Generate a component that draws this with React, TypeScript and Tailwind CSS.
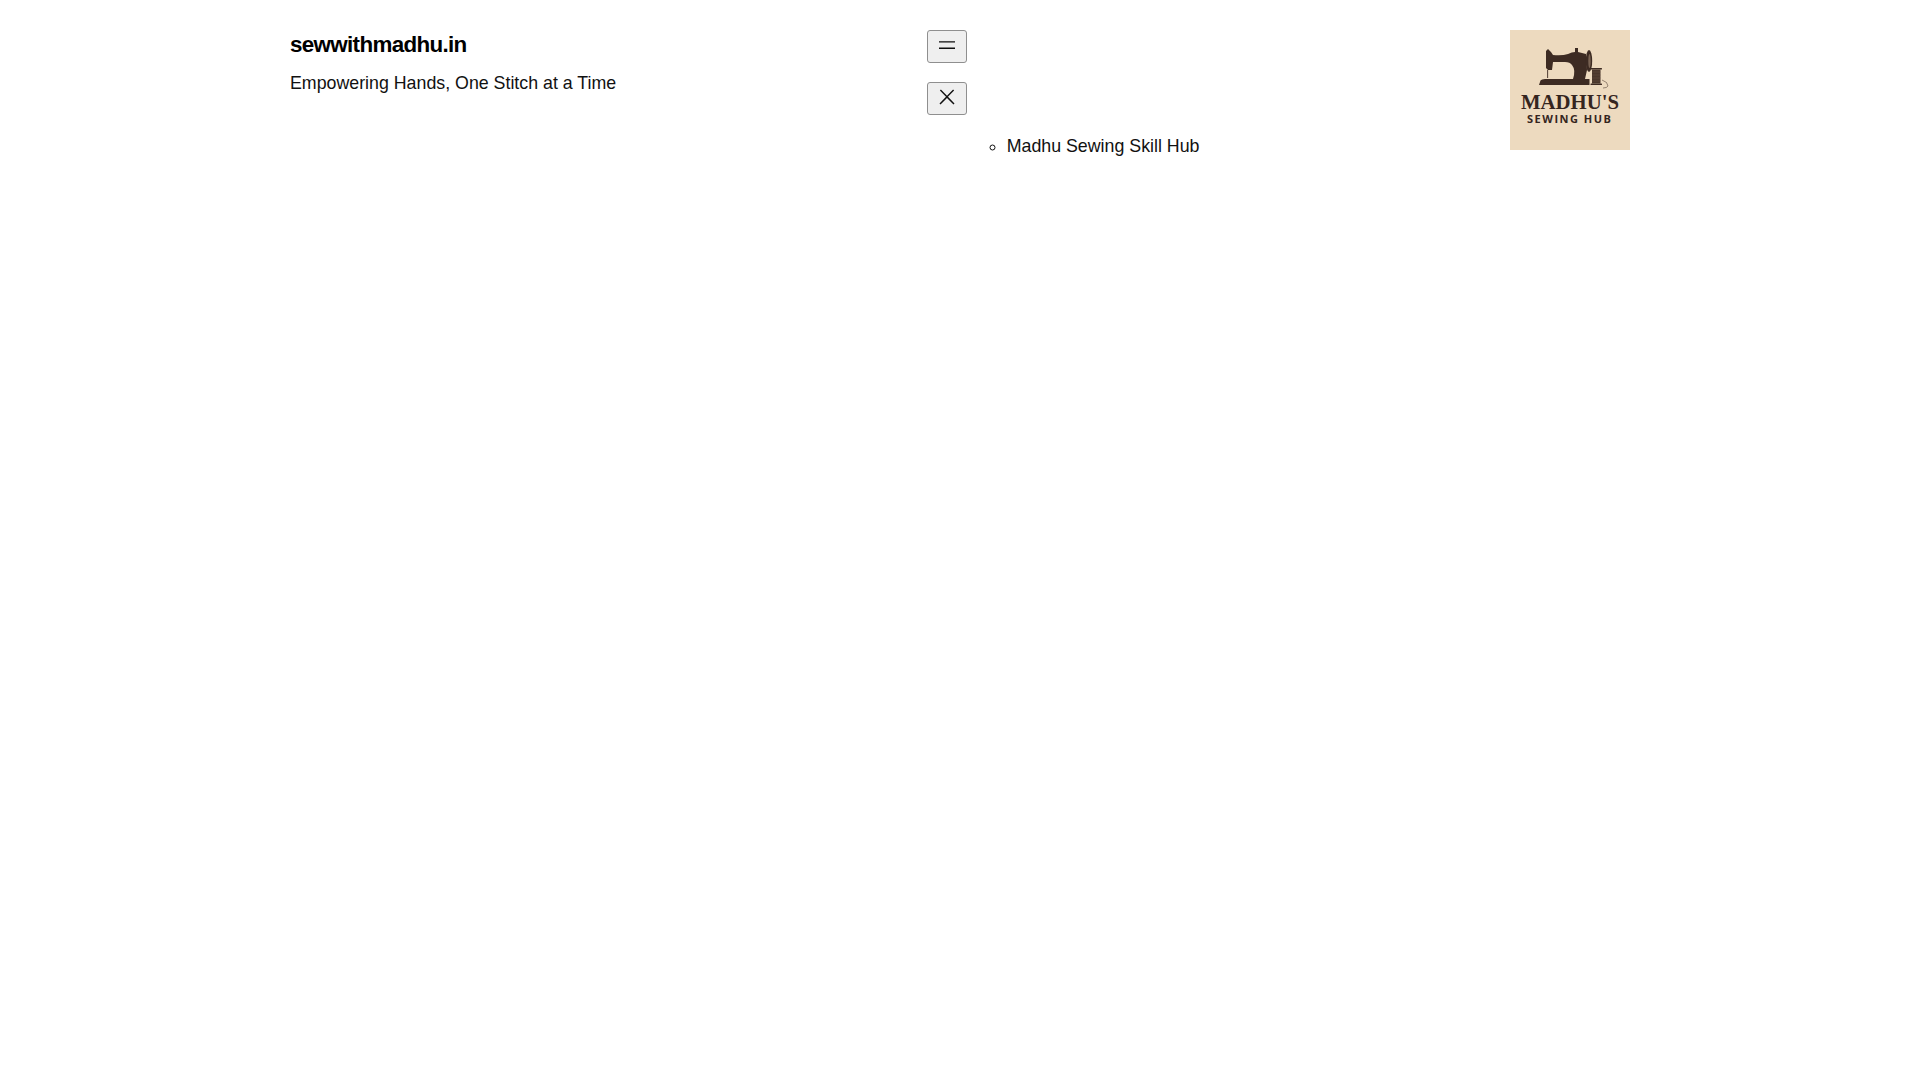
export default function App() {
  return (
    <div className="min-h-screen bg-white text-[#111111] font-['Liberation_Sans',Arial,sans-serif]">
      <header className="mx-auto flex w-[1340px] items-start justify-between pt-[30px]">
        <div>
          <p className="mt-[1px] text-[22.4px] leading-[28px] font-bold tracking-[-0.67px] text-black">sewwithmadhu.in</p>
          <p className="mt-[11px] text-[17.8px] leading-[27px]">Empowering Hands, One Stitch at a Time</p>
        </div>
        <nav className="flex flex-col items-start">
          <button className="flex h-[33px] w-10 items-center justify-center rounded-[3px] border border-[#8f8f8f] bg-[#efefef]">
            <svg width="24" height="24" viewBox="0 0 24 24" fill="#111111" className="-mt-[2px]">
              <path d="M4 7.2v1.4h16V7.2H4zm0 7.8h16v-1.4H4V15z" />
            </svg>
          </button>
          <button className="mt-[19px] flex h-[33px] w-10 items-center justify-center rounded-[3px] border border-[#8f8f8f] bg-[#efefef]">
            <svg width="24" height="24" viewBox="0 0 24 24" fill="#111111" className="-mt-[4px]">
              <path d="M13 11.8l6.1-6.3-1-1-6.1 6.2-6.1-6.2-1 1 6.1 6.3-6.5 6.7 1 1 6.5-6.6 6.5 6.6 1-1z" />
            </svg>
          </button>
          <ul className="pl-10 pt-[18px] text-[17.8px] leading-[27px]">
            <li>
              <ul className="list-[circle] pl-10">
                <li>Madhu Sewing Skill Hub</li>
              </ul>
            </li>
          </ul>
        </nav>
        <svg width="120" height="120" viewBox="0 0 120 120" className="block shrink-0">
          <rect width="120" height="120" fill="#eddabf" />
          <g fill="#3d2b23">
            <path d="M29 55 L30.500 50.500 Q31.500 49 35 49 L79.500 49 L79.500 55 Z" />
            <path d="M36 21 L38 19 L41 22 L43 25 Q52 26 58 24 Q62 22 65 22 L65 18 L68 18 L68 22 L76 24 L77 40 L75 49 L63 49 Q66 40 62 35 Q60 32 55 32 L43 32 L42 40 L38 40 L36 38 Z" />
            <ellipse cx="79" cy="31" rx="3.200" ry="11" />
            <rect x="37.200" y="40" width="0.900" height="8" />
            <rect x="80.500" y="38" width="11.500" height="1.500" rx="0.600" />
            <rect x="82" y="39.500" width="8.500" height="14" fill="#4a372c" />
            <rect x="80.500" y="53.500" width="11.500" height="1.500" rx="0.600" />
          </g>
          <ellipse cx="79.500" cy="31" rx="1.200" ry="7" fill="#7a6454" />
          <g stroke="#6f5949" strokeWidth="0.400">
            <path d="M82 42 H90.500 M82 45 H90.500 M82 48 H90.500 M82 51 H90.500" />
          </g>
          <path d="M92 50 Q98 52 98 56 Q97 58 93 58" fill="none" stroke="#3d2b23" strokeWidth="0.500" />
          <text x="60" y="78.500" textAnchor="middle" fontFamily="'Liberation Serif', serif" fontWeight="700" fontSize="22" textLength="98" lengthAdjust="spacingAndGlyphs" fill="#35251e">MADHU'S</text>
          <text x="59" y="93" textAnchor="middle" fontFamily="'Open Sans', sans-serif" fontWeight="700" fontSize="11" textLength="84" lengthAdjust="spacing" fill="#35251e">SEWING HUB</text>
        </svg>
      </header>
    </div>
  );
}
